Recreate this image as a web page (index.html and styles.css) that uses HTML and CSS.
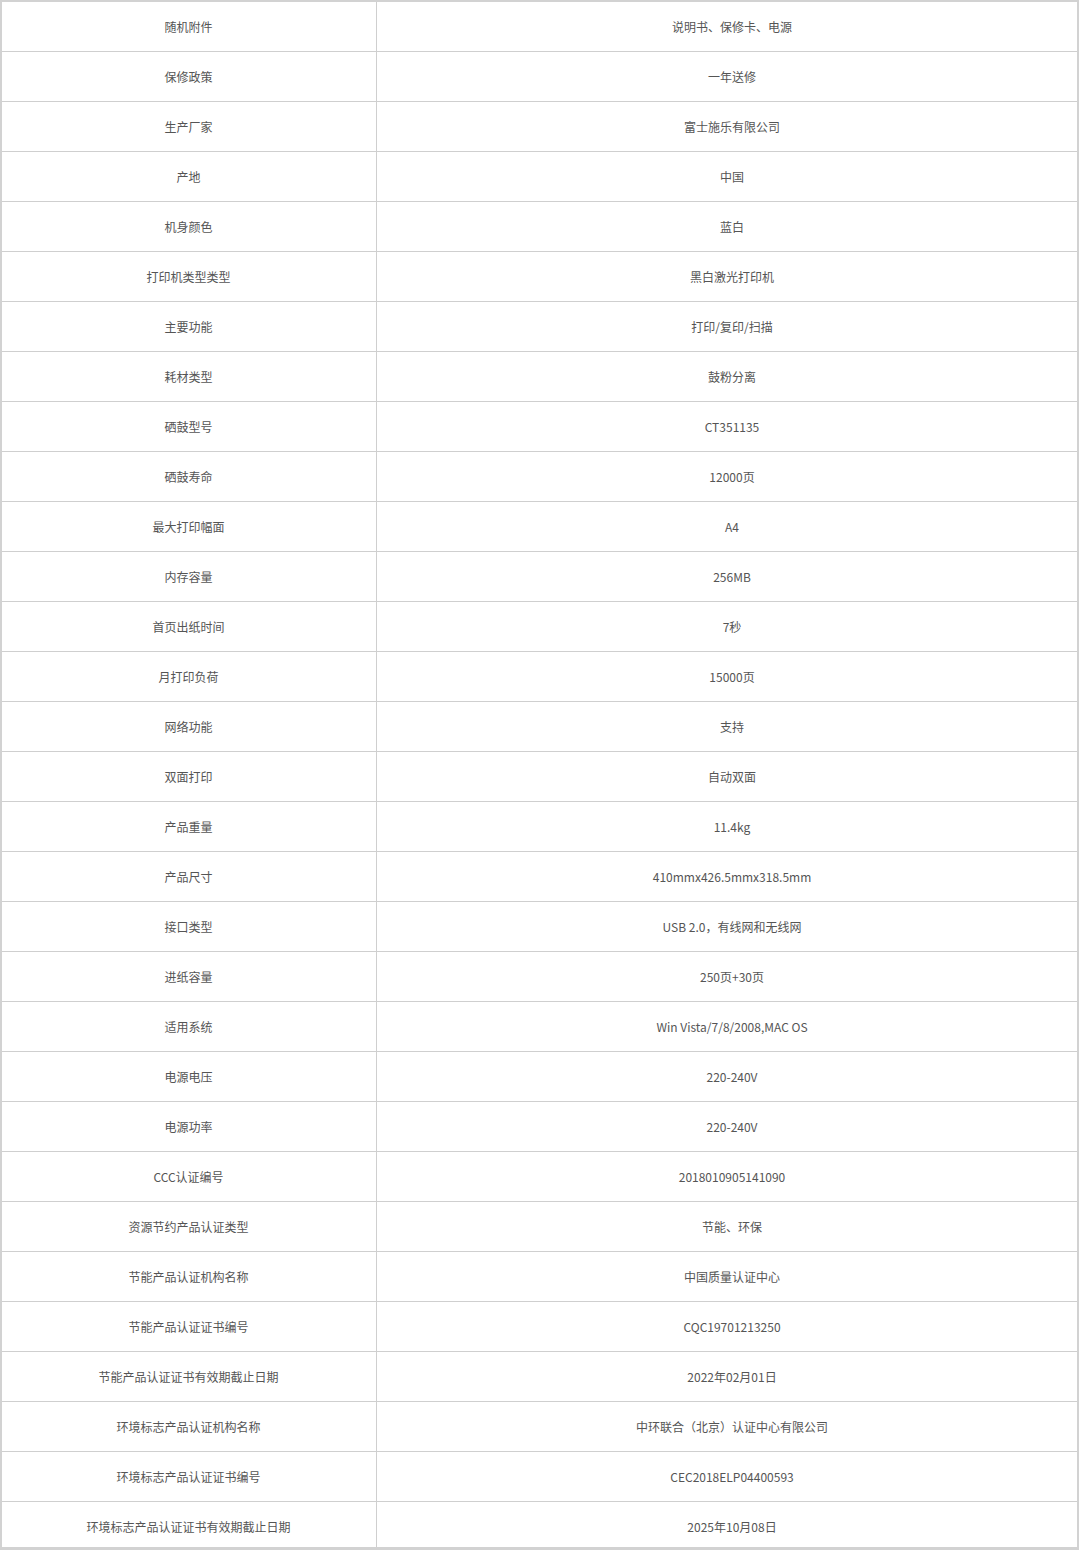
FILE: index.html
```html
<!DOCTYPE html>
<html lang="zh-CN">
<head>
<meta charset="utf-8">
<title>参数</title>
<link rel="stylesheet" href="styles.css">
</head>
<body>
<div class="frame">
<table class="spec">
<tbody>
<tr><td class="k">随机附件</td><td class="v">说明书、保修卡、电源</td></tr>
<tr><td class="k">保修政策</td><td class="v">一年送修</td></tr>
<tr><td class="k">生产厂家</td><td class="v">富士施乐有限公司</td></tr>
<tr><td class="k">产地</td><td class="v">中国</td></tr>
<tr><td class="k">机身颜色</td><td class="v">蓝白</td></tr>
<tr><td class="k">打印机类型类型</td><td class="v">黑白激光打印机</td></tr>
<tr><td class="k">主要功能</td><td class="v">打印/复印/扫描</td></tr>
<tr><td class="k">耗材类型</td><td class="v">鼓粉分离</td></tr>
<tr><td class="k">硒鼓型号</td><td class="v">CT351135</td></tr>
<tr><td class="k">硒鼓寿命</td><td class="v">12000页</td></tr>
<tr><td class="k">最大打印幅面</td><td class="v">A4</td></tr>
<tr><td class="k">内存容量</td><td class="v">256MB</td></tr>
<tr><td class="k">首页出纸时间</td><td class="v">7秒</td></tr>
<tr><td class="k">月打印负荷</td><td class="v">15000页</td></tr>
<tr><td class="k">网络功能</td><td class="v">支持</td></tr>
<tr><td class="k">双面打印</td><td class="v">自动双面</td></tr>
<tr><td class="k">产品重量</td><td class="v">11.4kg</td></tr>
<tr><td class="k">产品尺寸</td><td class="v">410mmx426.5mmx318.5mm</td></tr>
<tr><td class="k">接口类型</td><td class="v">USB 2.0，有线网和无线网</td></tr>
<tr><td class="k">进纸容量</td><td class="v">250页+30页</td></tr>
<tr><td class="k">适用系统</td><td class="v">Win Vista/7/8/2008,MAC OS</td></tr>
<tr><td class="k">电源电压</td><td class="v">220-240V</td></tr>
<tr><td class="k">电源功率</td><td class="v">220-240V</td></tr>
<tr><td class="k">CCC认证编号</td><td class="v">2018010905141090</td></tr>
<tr><td class="k">资源节约产品认证类型</td><td class="v">节能、环保</td></tr>
<tr><td class="k">节能产品认证机构名称</td><td class="v">中国质量认证中心</td></tr>
<tr><td class="k">节能产品认证证书编号</td><td class="v">CQC19701213250</td></tr>
<tr><td class="k">节能产品认证证书有效期截止日期</td><td class="v">2022年02月01日</td></tr>
<tr><td class="k">环境标志产品认证机构名称</td><td class="v">中环联合（北京）认证中心有限公司</td></tr>
<tr><td class="k">环境标志产品认证证书编号</td><td class="v">CEC2018ELP04400593</td></tr>
<tr><td class="k">环境标志产品认证证书有效期截止日期</td><td class="v">2025年10月08日</td></tr>
</tbody>
</table>
</div>
</body>
</html>
```

FILE: styles.css
```css
html, body {
  margin: 0;
  padding: 0;
  background: #ffffff;
}
body {
  font-family: "Noto Sans CJK SC", "Microsoft YaHei", sans-serif;
  font-size: 12px;
  color: #555555;
}
.frame {
  width: 1079px;
  height: 1550px;
  box-sizing: border-box;
  border: 2px solid #d2d2d2;
  border-bottom-width: 3px;
  overflow: hidden;
}
.spec {
  width: 1075px;
  border-collapse: collapse;
  table-layout: fixed;
}
.spec td {
  height: 49px;
  padding: 0;
  text-align: center;
  vertical-align: middle;
  border-bottom: 1px solid #cfcfcf;
  line-height: 16px;
}
.spec .k {
  width: 373px;
  padding-right: 1px;
  border-right: 1px solid #cfcfcf;
}
.spec .v {
  width: 690px;
  padding-left: 10px;
}
```
